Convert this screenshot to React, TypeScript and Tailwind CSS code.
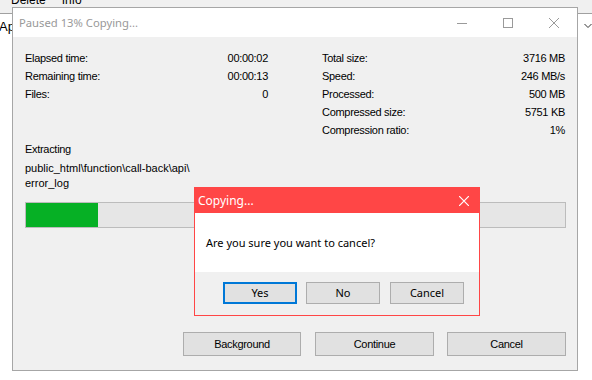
import React from "react";

function Row({ label, value }: { label: string; value: string }) {
  return (
    <div className="flex h-[18px] items-center justify-between leading-[18px]">
      <span>{label}</span>
      <span>{value}</span>
    </div>
  );
}

export default function App() {
  return (
    <div className="relative h-[380px] w-[592px] overflow-hidden bg-white font-['Liberation_Sans',Arial,sans-serif] text-black">
      {/* background application */}
      <div className="h-[22px] border-b border-[#a0a0a0] bg-[#f0f0f0]">
        <div className="-mt-[8px] flex pl-[11px] text-[12px] leading-[16px] text-black">
          <span>Delete</span>
          <span className="ml-[16px]">Info</span>
        </div>
      </div>
      <div className="flex h-[40px] items-start justify-between">
        <span className="-ml-[1px] mt-[5px] text-[13px] leading-[16px]">Ap</span>
        <div className="flex h-full items-start">
          <div className="h-full w-px bg-[#d9d9d9]" />
          <svg className="ml-[6px] mt-[9px]" width="8" height="6" viewBox="0 0 8 6">
            <path d="M0.5 1 L4 4.5 L7.5 1" fill="none" stroke="#333" strokeWidth="1" />
          </svg>
        </div>
      </div>

      {/* main progress window */}
      <div className="absolute left-[12px] top-[7px] flex h-[364px] w-[566px] flex-col border border-[#a6a6a6] bg-[#f0f0f0]">
        <div className="flex h-[29px] shrink-0 items-center bg-white">
          <span className="pl-[6px] font-['Noto_Sans',sans-serif] text-[11.25px] leading-[16px] text-[#999999]">
            Paused 13% Copying...
          </span>
          <div className="ml-auto flex h-full">
            <div className="flex h-full w-[46px] items-center justify-center">
              <svg width="10" height="10" viewBox="0 0 10 10">
                <path d="M0 5.5 H10" stroke="#9a9a9a" strokeWidth="1" />
              </svg>
            </div>
            <div className="flex h-full w-[46px] items-center justify-center">
              <svg width="10" height="10" viewBox="0 0 10 10">
                <rect x="0.5" y="0.5" width="9" height="9" fill="none" stroke="#9a9a9a" strokeWidth="1" />
              </svg>
            </div>
            <div className="flex h-full w-[46px] items-center justify-center">
              <svg width="10" height="10" viewBox="0 0 10 10">
                <path d="M0 0 L10 10 M10 0 L0 10" stroke="#9a9a9a" strokeWidth="1" />
              </svg>
            </div>
          </div>
        </div>

        <div className="flex flex-1 flex-col pb-[14px] pl-[12px] pr-[11px] pt-[12px] text-[11px] tracking-[-0.3px]">
          <div className="grid grid-cols-[243px_243px] gap-x-[54px]">
            <div className="flex flex-col">
              <Row label="Elapsed time:" value="00:00:02" />
              <Row label="Remaining time:" value="00:00:13" />
              <Row label="Files:" value="0" />
            </div>
            <div className="flex flex-col">
              <Row label="Total size:" value="3716 MB" />
              <Row label="Speed:" value="246 MB/s" />
              <Row label="Processed:" value="500 MB" />
              <Row label="Compressed size:" value="5751 KB" />
              <Row label="Compression ratio:" value="1%" />
            </div>
          </div>
          <div className="mt-[1px] leading-[18px]">Extracting</div>
          <div className="mt-[3px] leading-[15px] tracking-[0px]">
            <div>public_html\function\call-back\api\</div>
            <div>error_log</div>
          </div>
          <div className="mt-[11px] flex h-[26px] w-full border border-[#bcbcbc] bg-[#e6e6e6]">
            <div className="h-full w-[72px] bg-[#06b025]" />
          </div>
          <div className="mt-auto flex justify-end">
            <button className="h-[24px] w-[118px] border border-[#adadad] bg-[#e1e1e1] text-[11px] tracking-[-0.3px]">
              Background
            </button>
            <button className="ml-[14px] h-[24px] w-[119px] border border-[#adadad] bg-[#e1e1e1] text-[11px] tracking-[-0.3px]">
              Continue
            </button>
            <button className="ml-[13px] h-[24px] w-[119px] border border-[#adadad] bg-[#e1e1e1] text-[11px] tracking-[-0.3px]">
              Cancel
            </button>
          </div>
        </div>
      </div>

      {/* confirmation modal */}
      <div className="absolute left-[194px] top-[187px] flex h-[129px] w-[286px] flex-col border border-[#ff4646] font-['Noto_Sans',sans-serif] text-[11px]">
        <div className="flex h-[25px] shrink-0 items-center bg-[#ff4646]">
          <span className="pl-[3px] text-[12px] leading-[16px] text-white">Copying...</span>
          <div className="ml-auto flex h-full w-[30px] items-center justify-center">
            <svg width="10" height="10" viewBox="0 0 10 10">
              <path d="M0 0 L10 10 M10 0 L0 10" stroke="#ffffff" strokeWidth="1.2" />
            </svg>
          </div>
        </div>
        <div className="flex h-[59px] shrink-0 items-center bg-white pl-[11px]">
          <span className="leading-[16px]">Are you sure you want to cancel?</span>
        </div>
        <div className="flex flex-1 items-start justify-end bg-[#f0f0f0] pr-[15px] pt-[10px]">
          <button className="h-[22px] w-[74px] border-2 border-[#0078d7] bg-[#e1e1e1] leading-[16px]">Yes</button>
          <button className="ml-[9px] h-[22px] w-[74px] border border-[#adadad] bg-[#e1e1e1] leading-[16px]">No</button>
          <button className="ml-[10px] h-[22px] w-[74px] border border-[#adadad] bg-[#e1e1e1] leading-[16px]">Cancel</button>
        </div>
      </div>
    </div>
  );
}
